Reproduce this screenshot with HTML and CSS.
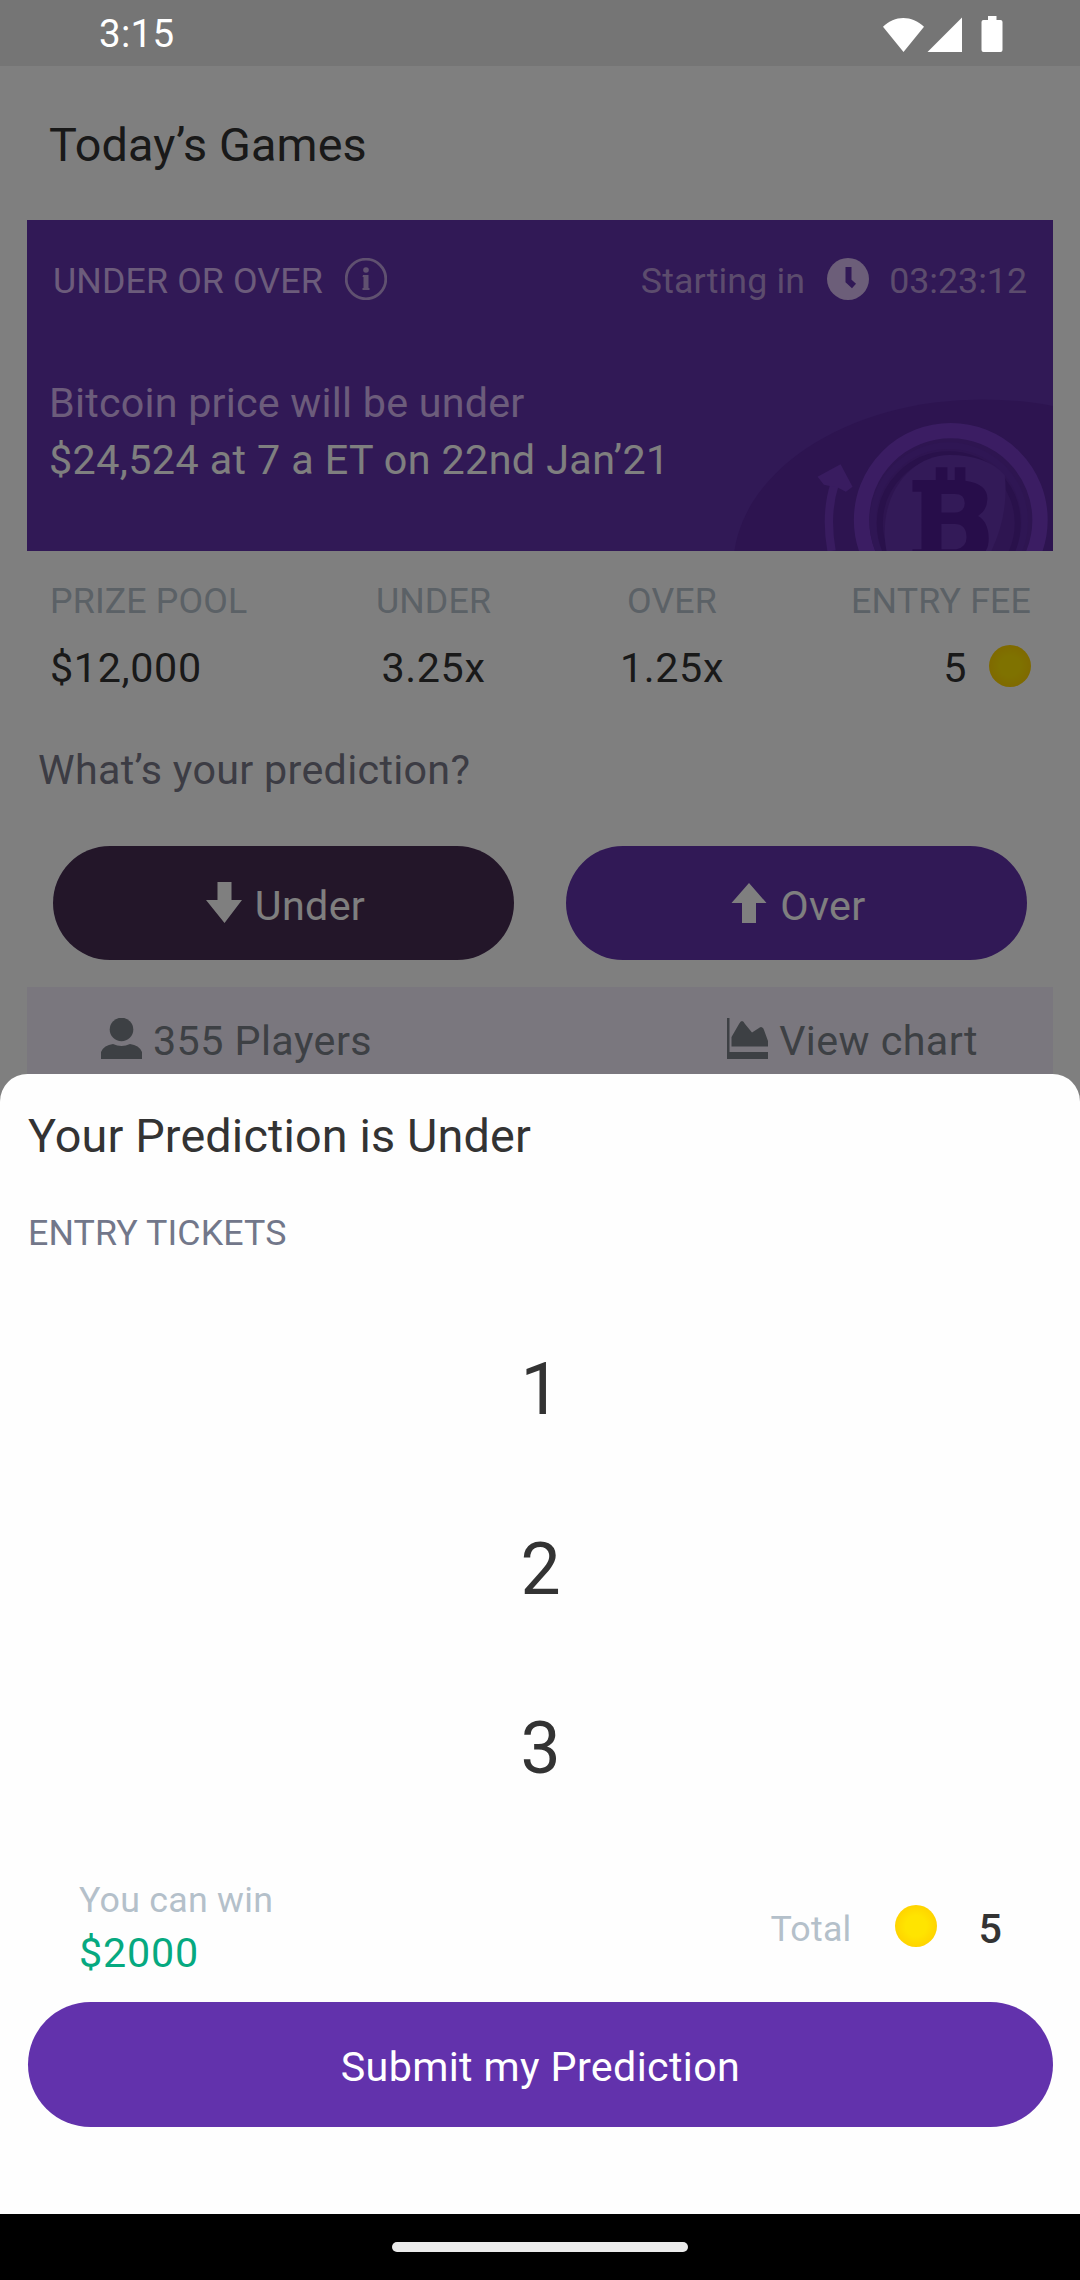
FILE: index.html
```html
<!DOCTYPE html>
<html lang="en">
<head>
<meta charset="utf-8">
<title>Today’s Games</title>
<link rel="stylesheet" href="styles.css">
</head>
<body>
<div class="phone">
  <header class="status-bar">
    <span class="clock">3:15</span>
    <svg class="status-icons" width="122" height="38" viewBox="0 0 122 38">
      <path d="M1 10.7 C12.500 -1 30 -1 42 10.700 L21.500 36 Z"/>
      <path d="M45.500 36 L80 1.500 V36 Z"/>
      <path d="M106 0 h8.500 v4 h4 q2 0 2 2 v28 q0 2 -2 2 h-17 q-2 0 -2 -2 v-28 q0 -2 2 -2 h4.500 Z"/>
    </svg>
  </header>

  <main class="stage">
    <section class="games">
      <h1 class="title">Today’s Games</h1>

      <article class="card">
        <div class="card-top">
          <span class="small soft">UNDER OR OVER</span>
          <svg class="icon info" width="42" height="42" viewBox="0 0 42 42">
            <circle cx="21" cy="21" r="19.800" fill="none" stroke="#c0a2e0" stroke-width="2.800"/>
            <circle cx="21" cy="12" r="2.800" fill="#c0a2e0"/>
            <path d="M18 17 h5.500 v13 h1 v2 h-7 v-2 h1 v-11 h-1 Z" fill="#c0a2e0"/>
          </svg>
          <span class="small faint starting">Starting in</span>
          <svg class="icon timer" width="42" height="42" viewBox="0 0 42 42">
            <circle cx="21" cy="21" r="21" fill="#d8bcf2"/>
            <path d="M21.500 9 V23 L27 28" fill="none" stroke="#6232ac" stroke-width="6"/>
          </svg>
          <span class="small faint time">03:23:12</span>
        </div>
        <p class="question soft">Bitcoin price will be under<br><span class="strong">$24,524 at 7 a ET on 22nd Jan’21</span></p>
        <svg class="coin-art" width="333" height="171" viewBox="0 0 1000 513">
          <ellipse cx="790" cy="560" rx="750" ry="502" fill="#5a28a0"/>
          <circle cx="693" cy="420" r="268" fill="#5c2aa2" stroke="#763bc6" stroke-width="46"/>
          <circle cx="687" cy="425" r="228" fill="none" stroke="#5e2ca8" stroke-width="20"/>
          <circle cx="687" cy="430" r="207" fill="none" stroke="#522296" stroke-width="18"/>
          <path d="M500 513 C470 350 570 225 690 225 C760 225 820 245 855 285 Q868 400 815 513 Z" fill="#6634b0"/>
          <path d="M578 300 H648 V262 H683 V300 H705 V262 H737 V302 Q805 312 803 358 Q802 392 775 408 Q806 425 807 475 Q807 500 798 513 H578 V508 H605 V335 H578 Z M665 342 V398 H705 Q735 396 735 370 Q735 342 705 342 Z M665 432 V508 H710 Q743 500 740 468 Q738 432 705 432 Z" fill="#4f1a94" fill-rule="evenodd"/>
          <path d="M335 513 Q315 400 345 310" fill="none" stroke="#7238c0" stroke-width="25"/>
          <path d="M293 290 L362 253 L398 320 L378 335 L352 322 L330 318 L312 314 Z" fill="#7238c0"/>
        </svg>
      </article>

      <dl class="stats">
        <div class="stat first"><dt>PRIZE POOL</dt><dd>$12,000</dd></div>
        <div class="stat"><dt>UNDER</dt><dd>3.25x</dd></div>
        <div class="stat"><dt>OVER</dt><dd>1.25x</dd></div>
        <div class="stat last"><dt>ENTRY FEE</dt><dd>5 <i class="coin"></i></dd></div>
      </dl>

      <p class="prompt">What’s your prediction?</p>

      <div class="choices">
        <div class="pill dark">
          <svg width="38" height="42" viewBox="0 0 38 42"><path d="M12.500 0 H26.500 V18 H37 L19.500 41 L1 18 H12.500 Z"/></svg>
          <span>Under</span>
        </div>
        <div class="pill violet">
          <svg width="38" height="42" viewBox="0 0 38 42"><path d="M19 1 L36.500 21 H26 V41 H12 V21 H1.500 Z"/></svg>
          <span>Over</span>
        </div>
      </div>

      <div class="strip">
        <div class="strip-item">
          <svg width="41" height="41" viewBox="0 0 41 41">
            <circle cx="20.500" cy="11.500" r="11.800"/>
            <path d="M0 41 V34 Q3 27 12 26 Q20.500 30 29 26 Q38 27 41 34 V41 Z"/>
          </svg>
          <span>355 Players</span>
        </div>
        <div class="strip-item">
          <svg width="41" height="41" viewBox="0 0 41 41">
            <path d="M0 0 H2.500 V34 H41 V41 H0 Z"/>
            <path d="M4.500 28.500 V19 L12 6 Q15 0 18 6 L25 14.500 L32 10 Q35 7 37 12 L41 23 V28.500 Z"/>
          </svg>
          <span>View chart</span>
        </div>
      </div>
    </section>

    <div class="scrim"></div>

    <section class="sheet">
      <h2 class="title">Your Prediction is Under</h2>
      <h3 class="sheet-label">ENTRY TICKETS</h3>
      <ul class="picker">
        <li>1</li>
        <li>2</li>
        <li>3</li>
      </ul>
      <div class="summary">
        <div class="win">
          <span class="muted">You can win</span>
          <span class="amount">$2000</span>
        </div>
        <div class="total">
          <span class="muted">Total</span>
          <i class="coin"></i>
          <b class="count">5</b>
        </div>
      </div>
      <button class="submit" type="button">Submit my Prediction</button>
    </section>
  </main>

  <footer class="nav-bar"><span class="handle"></span></footer>
</div>
</body>
</html>
```

FILE: styles.css
```css
* { box-sizing: border-box; margin: 0; padding: 0; }

body {
  font-family: Roboto, "Liberation Sans", sans-serif;
  font-size: 41.25px;
  line-height: 48px;
  letter-spacing: 0.35px;
  color: #333;
  background: #fff;
}

.phone {
  width: 1080px;
  height: 2280px;
  display: grid;
  grid-template-rows: 66px 1fr 66px;
  overflow: hidden;
}

svg { display: block; flex: none; }

/* System bars */
.status-bar {
  display: flex;
  justify-content: space-between;
  align-items: flex-start;
  padding: 11px 76px 0 99px;
  background: #757575;
  color: #fff;
}
.clock { font-size: 38.5px; line-height: 46px; letter-spacing: 0.3px; }
.status-icons { margin-top: 5px; fill: #fff; }

.nav-bar { background: #000; padding: 28px 392px 0; }
.handle { display: block; height: 10px; border-radius: 5px; background: #ebebeb; }

/* Game page */
.stage { position: relative; overflow: hidden; background: #fff; }
.games { padding: 52px 27px 0; isolation: isolate; }

.title { font-size: 46.75px; line-height: 54px; font-weight: 400; letter-spacing: 0.15px; }
.games .title { padding-left: 22px; margin-bottom: 48px; }

.small { font-size: 35.75px; line-height: 42px; letter-spacing: 0.13px; }
.time { letter-spacing: 0; }
.soft { color: #d8b8f6; }
.faint { color: #b898da; }
.strong { color: #fff; letter-spacing: 0.4px; }

.card {
  position: relative;
  height: 331px;
  padding: 38px 26px 0 22px;
  background: #6232ac;
}
.card-top { display: flex; height: 117px; padding-left: 4px; }
.card-top .small { margin-top: 2px; }
.info { margin-left: 22px; }
.starting { margin-left: auto; }
.timer { margin: 0 20px 0 22px; }
.question { position: relative; z-index: 1; line-height: 57px; letter-spacing: 0.22px; }
.coin-art { position: absolute; right: 0; bottom: 0; }

.stats {
  display: grid;
  grid-template-columns: 265px 237px 240px 239px;
  margin-top: 29px;
  padding-left: 23px;
}
.stat { display: flex; flex-direction: column; gap: 22px; align-items: center; }
.stat.first { align-items: flex-start; }
.stat.last { align-items: flex-end; }
.stat dt { font-size: 35.75px; line-height: 42px; letter-spacing: 0.15px; color: #b6c2cc; }
.stat dd { display: flex; gap: 22px; letter-spacing: 0.65px; }
.stat .coin { margin-top: 1px; }

.coin {
  width: 42px;
  height: 42px;
  border-radius: 50%;
  background: radial-gradient(circle, #ffe400 35%, #ffd400 70%);
}

.prompt { margin: 54px 0 52px 11px; letter-spacing: 0.3px; color: #787988; }

.choices { display: flex; gap: 52px; padding: 0 26px; }
.pill {
  flex: 1;
  height: 114px;
  border-radius: 57px;
  display: flex;
  justify-content: center;
  align-items: center;
  gap: 12px;
  padding-left: 3px;
  color: #fff;
  fill: #fff;
}
.pill span { padding-top: 5px; }
.dark { background: #462c52; }
.violet { background: #6232ac; }

.strip {
  display: flex;
  justify-content: space-between;
  height: 120px;
  margin-top: 27px;
  padding: 30px 75px 0 74px;
  background: #f5effc;
  color: #7a8088;
  fill: #7a8088;
  letter-spacing: 0.42px;
}
.strip-item { display: flex; gap: 11px; }
.strip-item svg { margin-top: 1px; }

.scrim { position: absolute; inset: 0; background: rgba(0, 0, 0, 0.5); }

/* Bottom sheet */
.sheet {
  position: absolute;
  left: 0;
  right: 0;
  bottom: 0;
  height: 1140px;
  padding: 35px 27px 0 28px;
  border-radius: 27.500px 27.500px 0 0;
  background: #fefefe;
}
.sheet-label {
  margin: 49px 0 46px;
  font-size: 35.75px;
  line-height: 42px;
  letter-spacing: 0.1px;
  font-weight: 400;
  color: #72778a;
}
.picker { list-style: none; text-align: center; font-size: 71.5px; line-height: 179.700px; letter-spacing: 0; }

.summary { display: flex; justify-content: space-between; padding: 40px 51px 25px 51px; }
.win { display: flex; flex-direction: column; gap: 8px; }
.muted { font-size: 35.75px; line-height: 42px; letter-spacing: 0.25px; color: #b4c0ca; }
.amount { color: #06a980; letter-spacing: 0.8px; }
.total { display: flex; align-items: flex-start; padding-top: 26px; }
.total .muted { margin-top: 3px; }
.total .coin { margin: 0 42px 0 43px; }
.count { font-weight: 500; letter-spacing: 0; }

.submit {
  display: block;
  width: 100%;
  height: 125px;
  border: 0;
  border-radius: 63px;
  padding-top: 4px;
  font: inherit;
  letter-spacing: inherit;
  color: #fff;
  background: #6232ac;
}
```
